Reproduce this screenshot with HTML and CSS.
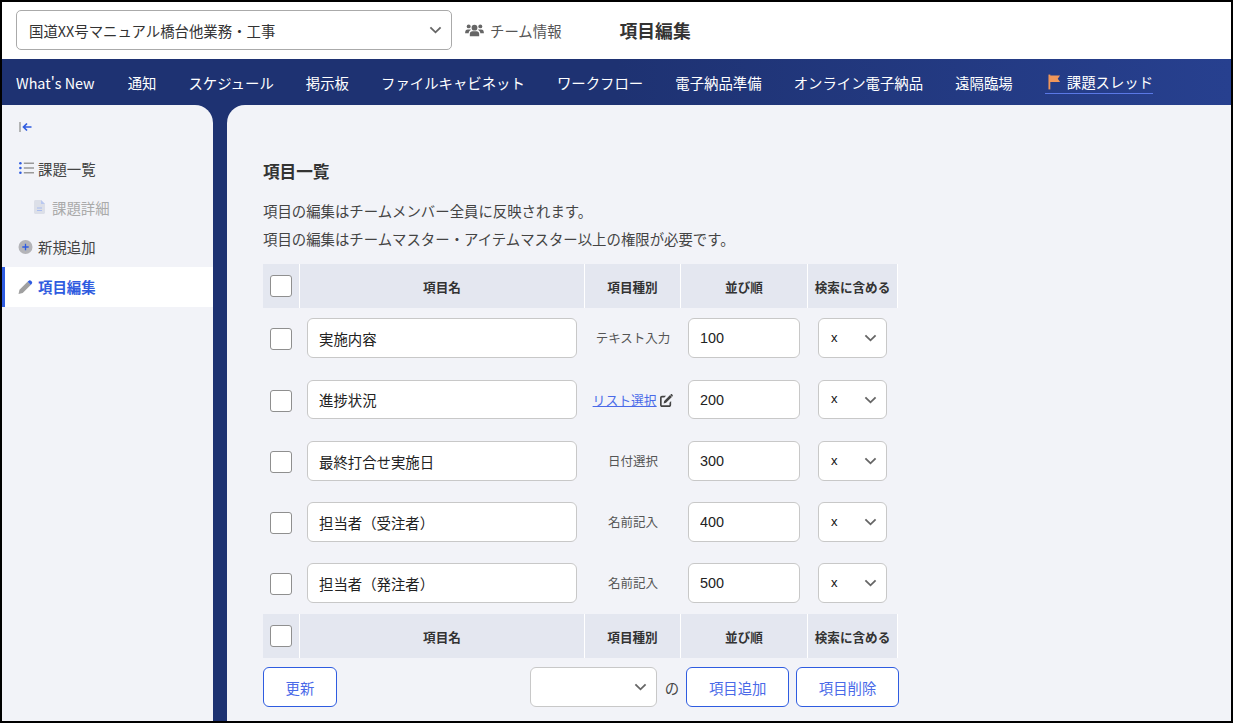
FILE: index.html
```html
<!DOCTYPE html>
<html lang="ja">
<head>
  <meta charset="UTF-8">
  <title>項目編集</title>
  <link rel="stylesheet" href="styles.css">
</head>
<body>
  <div class="frame">
    <header class="topbar">
      <div class="select team-select">
        <span>国道XX号マニュアル橋台他業務・工事</span>
        <svg class="chevron" viewBox="0 0 14 8"><path d="M1.500 1.200 7 6.500l5.500-5.300"/></svg>
      </div>
      <a class="team-info">
        <svg class="users" viewBox="0 0 20 16"><circle cx="10" cy="5" r="3.100"/><circle cx="3.800" cy="3.600" r="2.100"/><circle cx="16.200" cy="3.600" r="2.100"/><path d="M5 14v-2.300C5 9.700 6.300 8.800 7.800 8.800h4.400c1.500 0 2.800.9 2.800 2.900V14zM0 10.500C0 8 1 6.800 2.800 6.800h2.400c.4 0 .8.100 1.100.3C4.700 7.900 3.800 9.200 3.800 11H0zM20 10.500C20 8 19 6.800 17.200 6.800h-2.400c-.4 0-.8.100-1.100.3 1.600.8 2.500 2.100 2.500 3.900H20z"/></svg>
        チーム情報
      </a>
      <h1>項目編集</h1>
    </header>

    <nav class="mainnav">
      <a>What's New</a>
      <a>通知</a>
      <a>スケジュール</a>
      <a>掲示板</a>
      <a>ファイルキャビネット</a>
      <a>ワークフロー</a>
      <a>電子納品準備</a>
      <a>オンライン電子納品</a>
      <a>遠隔臨場</a>
      <a class="current">
        <svg class="flag" viewBox="0 0 14 16"><path d="M.5 0h2v16h-2z"/><path d="M2 1h11l-2.500 3.500L13 8H2z"/></svg>
        課題スレッド
      </a>
    </nav>

    <div class="content">
      <aside class="sidebar">
        <div class="collapse">
          <svg viewBox="0 0 14 12"><path class="bar" d="M1 1v10"/><path class="arrow" d="M12.500 6H5M8 2.500 4.500 6 8 9.500"/></svg>
        </div>
        <a class="side-item list">
          <svg class="side-icon" viewBox="0 0 14 12"><g class="dots"><circle cx="1.300" cy="1.500" r="1.200"/><circle cx="1.300" cy="6" r="1.200"/><circle cx="1.300" cy="10.500" r="1.200"/></g><path class="lines" d="M4.500 1.500H14M4.500 6H14M4.500 10.500H14"/></svg>
          課題一覧
        </a>
        <a class="side-item sub">
          <svg class="side-icon doc" viewBox="0 0 12 14"><path class="sheet" d="M1.500 0H7l4 4v8.500c0 .8-.7 1.500-1.500 1.500h-8C.7 14 0 13.300 0 12.500v-11C0 .7.700 0 1.500 0z"/><path class="fold" d="M7 0l4 4H7z"/><path class="rule" d="M3 8h5M3 10.500h5"/></svg>
          課題詳細
        </a>
        <a class="side-item add">
          <svg class="side-icon" viewBox="0 0 14 14"><circle class="disc" cx="7" cy="7" r="7"/><path class="plus" d="M7 3.800v6.400M3.800 7h6.400"/></svg>
          新規追加
        </a>
        <a class="side-item active">
          <svg class="side-icon" viewBox="0 0 14 14"><path class="pen" d="M0 14l1-4.200L9 1.800l3.200 3.200-8 8z"/><path class="tip" d="M10 .9c.8-.8 1.800-.8 2.500-.1l.7.7c.7.700.7 1.700-.1 2.500l-.9.900L9.100 1.800z"/></svg>
          項目編集
        </a>
      </aside>

      <main class="main">
        <h2>項目一覧</h2>
        <p class="note">項目の編集はチームメンバー全員に反映されます。</p>
        <p class="note">項目の編集はチームマスター・アイテムマスター以上の権限が必要です。</p>

        <table class="items">
          <thead>
            <tr>
              <th><input type="checkbox" class="check"></th>
              <th>項目名</th>
              <th>項目種別</th>
              <th>並び順</th>
              <th>検索に含める</th>
            </tr>
          </thead>
          <tbody>
            <tr>
              <td><input type="checkbox" class="check"></td>
              <td><input type="text" class="name" value="実施内容"></td>
              <td class="kind">テキスト入力</td>
              <td><input type="text" class="order" value="100"></td>
              <td><div class="select small"><span>x</span><svg class="chevron" viewBox="0 0 14 8"><path d="M1.500 1.200 7 6.500l5.500-5.300"/></svg></div></td>
            </tr>
            <tr>
              <td><input type="checkbox" class="check"></td>
              <td><input type="text" class="name" value="進捗状況"></td>
              <td class="kind"><a class="kind-link">リスト選択</a>
                <svg class="edit" viewBox="0 0 14 14"><path d="M6.500 2H2.200C1 2 0 3 0 4.200v7.600C0 13 1 14 2.200 14h7.600c1.200 0 2.200-1 2.200-2.200V7.500l-1.800 1.800v2.500c0 .2-.2.400-.4.400H2.200c-.2 0-.4-.2-.4-.4V4.200c0-.2.200-.4.400-.4h2.500z"/><path d="M4.500 7.500 10.800 1.200l2 2L6.500 9.500l-2.600.6zM11.500.5c.5-.5 1.100-.5 1.500-.1l.6.600c.4.400.4 1-.1 1.500l-.4.400-2-2z"/></svg>
              </td>
              <td><input type="text" class="order" value="200"></td>
              <td><div class="select small"><span>x</span><svg class="chevron" viewBox="0 0 14 8"><path d="M1.500 1.200 7 6.500l5.500-5.300"/></svg></div></td>
            </tr>
            <tr>
              <td><input type="checkbox" class="check"></td>
              <td><input type="text" class="name" value="最終打合せ実施日"></td>
              <td class="kind">日付選択</td>
              <td><input type="text" class="order" value="300"></td>
              <td><div class="select small"><span>x</span><svg class="chevron" viewBox="0 0 14 8"><path d="M1.500 1.200 7 6.500l5.500-5.300"/></svg></div></td>
            </tr>
            <tr>
              <td><input type="checkbox" class="check"></td>
              <td><input type="text" class="name" value="担当者（受注者）"></td>
              <td class="kind">名前記入</td>
              <td><input type="text" class="order" value="400"></td>
              <td><div class="select small"><span>x</span><svg class="chevron" viewBox="0 0 14 8"><path d="M1.500 1.200 7 6.500l5.500-5.300"/></svg></div></td>
            </tr>
            <tr>
              <td><input type="checkbox" class="check"></td>
              <td><input type="text" class="name" value="担当者（発注者）"></td>
              <td class="kind">名前記入</td>
              <td><input type="text" class="order" value="500"></td>
              <td><div class="select small"><span>x</span><svg class="chevron" viewBox="0 0 14 8"><path d="M1.500 1.200 7 6.500l5.500-5.300"/></svg></div></td>
            </tr>
          </tbody>
          <tfoot>
            <tr>
              <th><input type="checkbox" class="check"></th>
              <th>項目名</th>
              <th>項目種別</th>
              <th>並び順</th>
              <th>検索に含める</th>
            </tr>
          </tfoot>
        </table>

        <div class="actions">
          <button class="btn update">更新</button>
          <div class="select count"><svg class="chevron" viewBox="0 0 14 8"><path d="M1.500 1.200 7 6.500l5.500-5.300"/></svg></div>
          <span class="no">の</span>
          <button class="btn">項目追加</button>
          <button class="btn">項目削除</button>
        </div>
      </main>
    </div>
  </div>
</body>
</html>
```

FILE: styles.css
```css
* {
  box-sizing: border-box;
}
html, body {
  height: 100%;
}
body {
  margin: 0;
  overflow: hidden;
  font-family: "Noto Sans CJK JP", "Noto Sans", sans-serif;
  color: #333;
  background: #000;
}
.frame {
  height: 723px;
  border: 2px solid #000;
  display: flex;
  flex-direction: column;
  background: #1e3272;
  overflow: hidden;
}

/* top */
.topbar {
  height: 57px;
  flex: none;
  display: flex;
  align-items: center;
  padding: 0 0 1px 14px;
  background: #fff;
}
.select {
  display: flex;
  align-items: center;
  justify-content: space-between;
  background: #fff;
  border: 1px solid #c8c8c8;
  border-radius: 5px;
}
.chevron {
  width: 13px;
  height: 8px;
  fill: none;
  stroke: #666;
  stroke-width: 2;
}
.team-select {
  width: 436px;
  height: 40px;
  padding: 0 9px 0 12px;
  font-size: 14.4px;
  border-color: #aaa;
}
.team-info {
  display: flex;
  align-items: center;
  gap: 6px;
  margin-left: 13px;
  font-size: 14.4px;
  color: #555;
}
.users {
  width: 19px;
  height: 15px;
  fill: #666;
}
h1 {
  margin: 0 0 0 58px;
  font-size: 17.8px;
  font-weight: 700;
  color: #333;
}

.mainnav {
  height: 46px;
  flex: none;
  display: flex;
  align-items: center;
  gap: 32px;
  padding-left: 14px;
  background: linear-gradient(90deg, #1e3272 50%, #27408f);
  font-size: 14.4px;
  font-weight: 400;
  color: #fff;
}
.mainnav a {
  display: flex;
  align-items: center;
  height: 24px;
  white-space: nowrap;
}
.mainnav a:first-child {
  margin-right: 1px;
}
.mainnav .current {
  gap: 6px;
  padding: 0 0 0 3px;
  border-bottom: 1px solid #5a78e6;
}
.flag {
  width: 13px;
  height: 16px;
  fill: #f0965a;
}

/* sidebar */
.content {
  flex: 1;
  display: flex;
  gap: 14px;
  min-height: 0;
}
.sidebar {
  width: 211px;
  flex: none;
  background: #f2f3f8;
  border-top-right-radius: 18px;
}
.collapse {
  height: 44px;
  padding: 16px 0 0 17px;
}
.collapse svg {
  display: block;
  width: 14px;
  height: 12px;
  fill: none;
}
.collapse .bar {
  stroke: #999;
  stroke-width: 1.4;
}
.collapse .arrow {
  stroke: #2f5ce0;
  stroke-width: 1.7;
}
.side-item {
  display: flex;
  align-items: center;
  gap: 5px;
  height: 39px;
  padding: 0 0 1px 16px;
  font-size: 14.4px;
  color: #444;
}
.side-item.list {
  padding-left: 17px;
  gap: 4px;
}
.side-item.add {
  height: 40px;
}
.side-icon {
  width: 15px;
  height: 14px;
  flex: none;
}
.dots {
  fill: #2f5ce0;
}
.lines {
  stroke: #999;
  stroke-width: 1.4;
}
.side-item.sub {
  gap: 6px;
  padding-left: 32px;
  color: #aaa;
}
.doc {
  width: 12px;
}
.sheet {
  fill: #dcdfe8;
}
.fold {
  fill: #b9c8f0;
}
.rule {
  stroke: #a8bcf0;
  stroke-width: 1;
}
.disc {
  fill: #b4b4b8;
}
.plus {
  stroke: #2f5ce0;
  stroke-width: 1.3;
}
.side-item.active {
  height: 40px;
  background: #fff;
  border-left: 3px solid #2f5ce0;
  padding-left: 13px;
  color: #2f5ce0;
  font-weight: 700;
}
.pen {
  fill: #a0a0a0;
}
.tip {
  fill: #2f5ce0;
}

/* main */
.main {
  flex: 1;
  background: #f2f3f8;
  border-top-left-radius: 18px;
  padding: 54px 0 0 36px;
}
h2 {
  margin: 0 0 18px;
  font-size: 16.64px;
  line-height: 24px;
  font-weight: 700;
  color: #333;
}
.note {
  margin: 0 0 9px;
  font-size: 14.4px;
  line-height: 19px;
  color: #444;
}
.items {
  margin-top: 16px;
  width: 635px;
  table-layout: fixed;
  border-collapse: separate;
  border-spacing: 0;
}
.items th {
  height: 44px;
  padding: 0;
  background: #e4e7f0;
  border-right: 1px solid #fff;
  font-size: 12.6px;
  font-weight: 700;
  text-align: center;
  color: #333;
}
.items th:nth-child(1), .items td:nth-child(1) { width: 37px; }
.items th:nth-child(2), .items td:nth-child(2) { width: 285px; }
.items th:nth-child(3), .items td:nth-child(3) { width: 96px; }
.items th:nth-child(4), .items td:nth-child(4) { width: 127px; }
.items td {
  height: 61px;
  padding: 10px 0 0;
  text-align: center;
  vertical-align: top;
}
.items tbody tr:first-child td {
  height: 62px;
}
.items tbody tr:nth-child(2) .name,
.items tbody tr:nth-child(2) .order,
.items tbody tr:nth-child(2) .small {
  height: 39px;
}
.items td .check {
  margin-top: 10px;
}
.check {
  appearance: none;
  display: block;
  width: 22px;
  height: 22px;
  margin: 0 0 0 7px;
  background: #fff;
  border: 1px solid #8f8f8f;
  border-radius: 3px;
}
.name, .order {
  display: block;
  height: 40px;
  background: #fff;
  border: 1px solid #c8c8c8;
  border-radius: 6px;
  outline: none;
  color: #222;
}
.name {
  width: 270px;
  margin-left: 7px;
  padding: 0 11px;
  font-family: "Noto Sans CJK JP", sans-serif;
  font-size: 14.4px;
}
.order {
  width: 112px;
  margin-left: 7px;
  padding: 0 11px;
  font-family: "Liberation Sans", sans-serif;
  font-size: 14.4px;
}
.kind {
  font-size: 12.5px;
  line-height: 40px;
  color: #555;
  white-space: nowrap;
}
.kind-link {
  font-size: 12.8px;
  color: #4a6ae8;
  text-decoration: underline;
}
.edit {
  width: 13px;
  height: 13px;
  margin-left: 1px;
  fill: #444;
  vertical-align: -2px;
}
.small {
  width: 69px;
  height: 40px;
  margin-left: 10px;
  padding: 0 9px 0 12px;
  border-radius: 6px;
  font-family: "Liberation Sans", sans-serif;
  font-size: 13px;
  color: #111;
}
.small span {
  padding-bottom: 2px;
}

.actions {
  width: 636px;
  display: flex;
  align-items: center;
  margin-top: 9px;
  font-size: 14.4px;
}
.btn {
  width: 103px;
  height: 40px;
  padding: 0;
  background: #fff;
  border: 1px solid #2f5ce0;
  border-radius: 6px;
  font-family: "Noto Sans CJK JP", sans-serif;
  font-size: 14.4px;
  color: #4a6ae8;
  margin-left: 7px;
}
.btn.update {
  width: 74px;
  margin-left: 0;
}
.count {
  width: 127px;
  height: 40px;
  margin-left: 193px;
  padding: 0 9px;
  justify-content: flex-end;
  border-radius: 6px;
}
.no {
  margin-left: 8px;
  color: #444;
}
```
